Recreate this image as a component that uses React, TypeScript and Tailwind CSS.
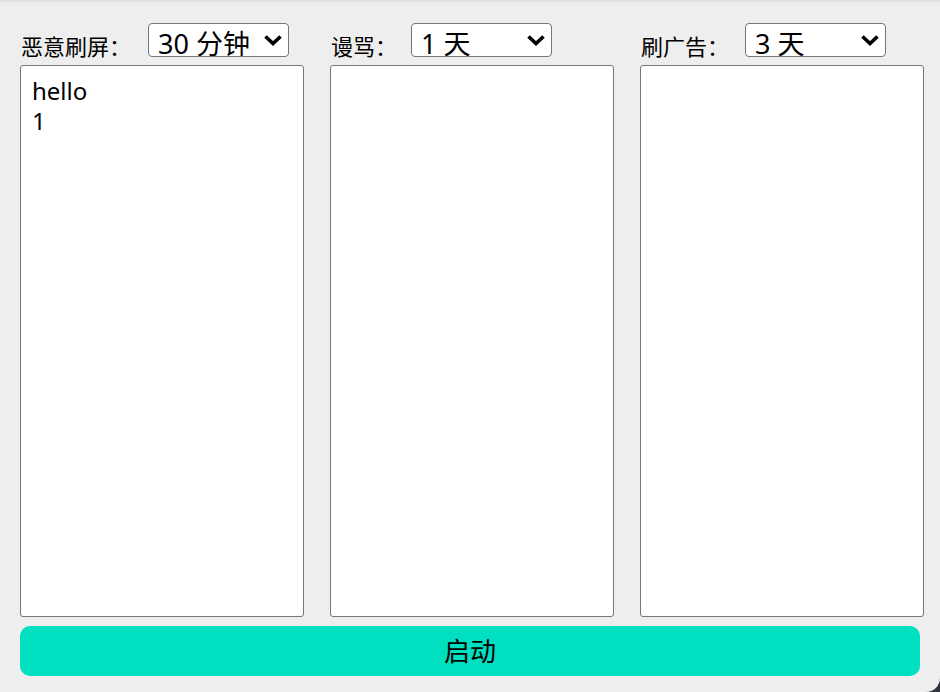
import React from 'react'

const cols = [
  { label: '恶意刷屏：', labelW: 'w-[128px]', value: '30 分钟', text: 'hello\n1' },
  { label: '谩骂：', labelW: 'w-[81px]', value: '1 天', text: '' },
  { label: '刷广告：', labelW: 'w-[105px]', value: '3 天', text: '' },
]

function Chevron() {
  return (
    <svg width="20" height="12" viewBox="0 0 20 12" className="shrink-0 mt-[10px]">
      <polyline points="2.5,2.5 10,9.5 17.5,2.5" fill="none" stroke="#000" strokeWidth="3.6" strokeLinejoin="miter" />
    </svg>
  )
}

function FakeSelect({ value }: { value: string }) {
  return (
    <div className="flex h-[34px] w-[141px] shrink-0 items-start justify-between overflow-hidden rounded-[4px] border border-[#767676] bg-white pl-[9px] pr-[5px]">
      <span className="whitespace-pre pt-[6px] text-[27px] leading-[27px] text-black">{value}</span>
      <Chevron />
    </div>
  )
}

export default function App() {
  return (
    <div className="h-[692px] w-[940px] bg-[#30343f]">
      <div className="flex h-full flex-col rounded-br-[14px] border-t-2 border-[#e2e2e2] bg-[#eeeeee] px-5 pt-[21px] font-['Noto_Sans','Noto_Sans_CJK_SC',sans-serif]">
        <div className="flex gap-[26px]">
          {cols.map((c) => (
            <div key={c.label} className="flex w-[284px] shrink-0 flex-col">
              {/* 标题 + 下拉 */}
              <div className="flex h-[34px] items-end">
                <span className={`${c.labelW} shrink-0 pl-[1px] text-[22px] leading-[22px] text-black`}>{c.label}</span>
                <FakeSelect value={c.value} />
              </div>
              <textarea
                readOnly
                defaultValue={c.text}
                className="mt-[8px] h-[552px] w-full resize-none overflow-hidden rounded-[3px] border border-[#767676] bg-white px-[11px] pt-[10px] text-[24px] leading-[30px] text-black outline-none"
              />
            </div>
          ))}
        </div>
        <button className="mt-[9px] h-[50px] w-[900px] rounded-[10px] bg-[#00dfbf] text-[26px] text-black">
          启动
        </button>
      </div>
    </div>
  )
}
